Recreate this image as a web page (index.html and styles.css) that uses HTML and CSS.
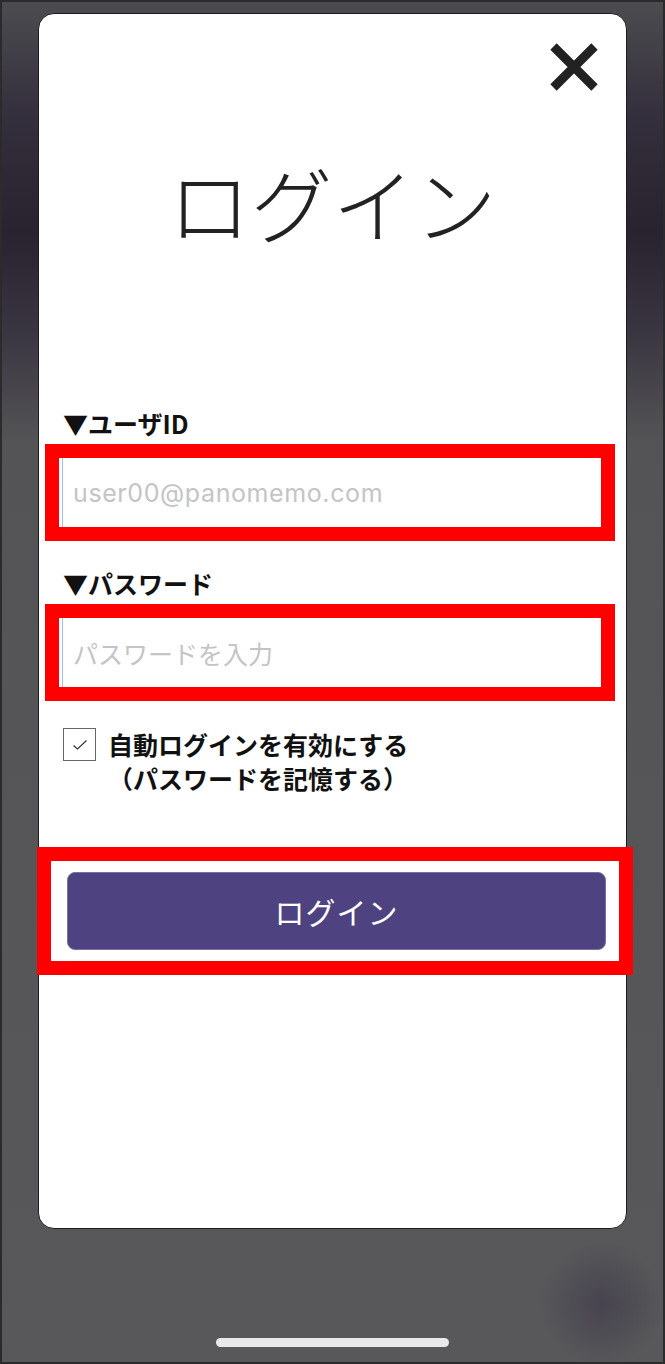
FILE: index.html
```html
<!DOCTYPE html>
<html lang="ja">
<head>
    <meta charset="UTF-8">
    <title>ログイン</title>
    <link rel="stylesheet" href="styles.css">
</head>
<body>

<div class="screen">
    <div class="card">
        <div class="card-head">
            <a href="javascript:;" class="close" aria-label="閉じる">
                <svg width="48" height="48" viewBox="0 0 48 48">
                    <path d="M3.5 3.5 L44.5 44.5 M44.5 3.5 L3.5 44.5" stroke="#222" stroke-width="9" fill="none"/>
                </svg>
            </a>
        </div>

        <h1 class="title">ログイン</h1>

        <div class="form">
            <p class="label">▼ユーザID</p>
            <div class="mark">
                <div class="field"><span class="hint hint-latin">user00@panomemo.com</span></div>
            </div>

            <p class="label label-pw">▼パスワード</p>
            <div class="mark">
                <div class="field"><span class="hint">パスワードを入力</span></div>
            </div>

            <div class="remember">
                <span class="check">
                    <svg width="16" height="12" viewBox="0 0 16 12">
                        <path d="M1.5 6.5 L5.5 10 L14.5 1.5" stroke="#333" stroke-width="1.2" fill="none"/>
                    </svg>
                </span>
                <p class="remember-text">自動ログインを有効にする<br>（パスワードを記憶する）</p>
            </div>

            <div class="mark mark-btn">
                <a href="javascript:;" class="btn">ログイン</a>
            </div>
        </div>
    </div>

    <div class="home-bar"></div>
</div>

</body>
</html>
```

FILE: styles.css
```css
* {
    margin: 0;
    padding: 0;
    box-sizing: border-box;
    text-decoration: none;
}

body {
    background: #555557;
    font-family: "Noto Sans CJK JP", "Noto Sans", sans-serif;
}

.screen {
    width: 665px;
    height: 1364px;
    border: 2px solid #2b2b2b;
    padding: 11px 0 0 36px;
    position: relative;
    background:
        radial-gradient(circle at 600px 1302px, rgba(66, 62, 76, .8) 0, rgba(70, 66, 78, .6) 22px, rgba(87, 87, 89, 0) 62px),
        linear-gradient(to bottom, #4c4c50 0, #35303d 110px, #29222f 230px, #3a3641 330px, #545456 440px, #58585a 100%);
}

.card {
    width: 589px;
    height: 1216px;
    background: #fff;
    border: 1px solid #1c1c1c;
    border-radius: 16px;
}

.card-head {
    display: flex;
    justify-content: flex-end;
    padding: 29px 28px 0 0;
}

.close {
    display: block;
    width: 48px;
    height: 48px;
}

.close svg {
    display: block;
}

.title {
    margin-top: 71px;
    text-align: center;
    font-size: 82px;
    line-height: 80px;
    font-weight: 300;
    color: #222;
}

.form {
    margin-top: 166px;
}

.label {
    margin-left: 24px;
    font-size: 25px;
    line-height: 30px;
    font-weight: 700;
    color: #111;
    margin-bottom: 6px;
}

.label-pw {
    margin-top: 27px;
}

.mark {
    margin-left: 6px;
    width: 570px;
    border: 14px solid #ff0000;
}

.field {
    height: 69px;
    margin-left: 3px;
    border-left: 1px solid #9ec0f2;
    padding-left: 10px;
    display: flex;
    align-items: center;
}

.hint {
    font-size: 25px;
    color: #c4c4c6;
}

.hint-latin {
    font-family: "Inter", "Liberation Sans", sans-serif;
    letter-spacing: 0.6px;
}

.remember {
    display: flex;
    align-items: flex-start;
    gap: 12px;
    margin: 27px 0 0 24px;
}

.check {
    width: 33px;
    height: 33px;
    border: 1.5px solid #666;
    display: flex;
    align-items: center;
    justify-content: center;
    flex-shrink: 0;
}

.remember-text {
    margin-top: -1px;
    font-size: 25px;
    line-height: 34px;
    font-weight: 700;
    color: #111;
}

.mark-btn {
    margin: 52px 0 0 -2px;
    width: 596px;
    padding: 11px 13px 11px 16px;
    background: #fff;
}

.btn {
    display: flex;
    align-items: center;
    justify-content: center;
    height: 78px;
    background: #4f4280;
    border: 1px solid #7a6ea4;
    border-radius: 8px;
    color: #fff;
    font-size: 30px;
    font-weight: 400;
    letter-spacing: 1px;
}

.home-bar {
    position: absolute;
    left: 214px;
    bottom: 15px;
    width: 233px;
    height: 9px;
    border-radius: 5px;
    background: #e9e9e9;
}
```
